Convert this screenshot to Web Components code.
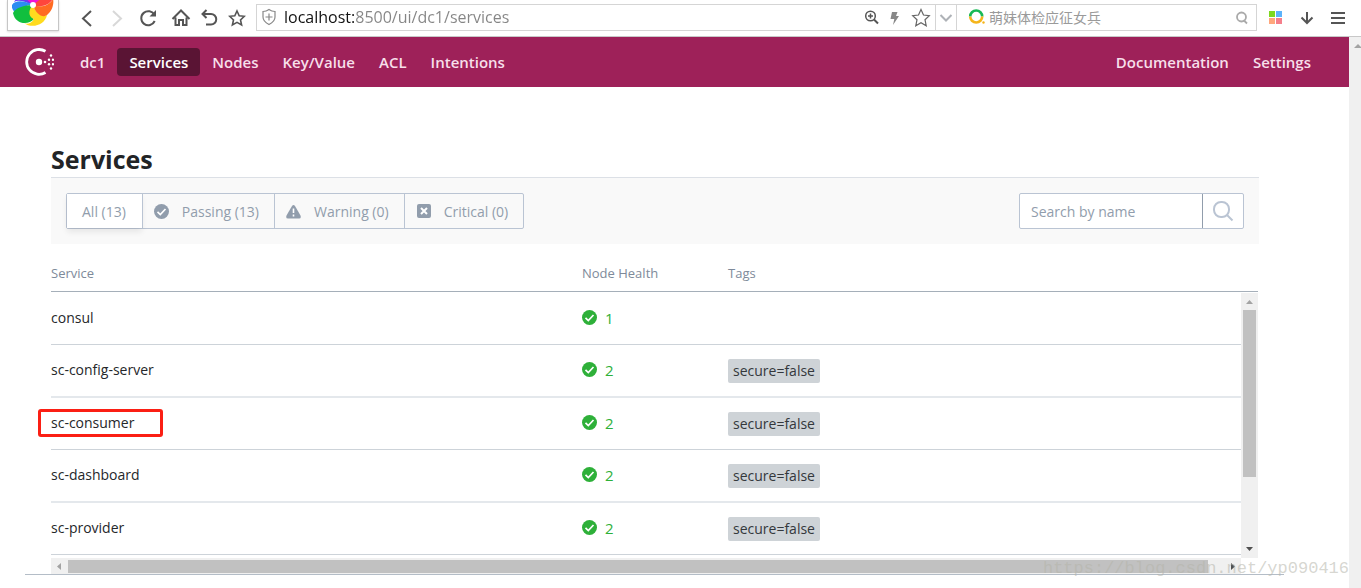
<!DOCTYPE html>
<html lang="en">
<head>
<meta charset="utf-8">
<title>Consul - Services</title>
<style>
  html, body { margin: 0; height: 100%; }
  body { overflow: hidden; background: #fff; font: 14px/20px "Open Sans", "Noto Sans", "Noto Sans CJK SC", sans-serif; color: #25272a; }
</style>
</head>
<body>
<app-window>
  <browser-bar slot="bar"></browser-bar>
  <consul-nav slot="nav"></consul-nav>
  <services-page></services-page>
</app-window>

<script>
const define = (name, html, setup) => customElements.define(name, class extends HTMLElement {
  constructor() {
    super();
    const tpl = document.createElement('template');
    tpl.innerHTML = html;
    this.attachShadow({ mode: 'open' }).append(tpl.content.cloneNode(true));
  }
  connectedCallback() { if (setup) setup(this, this.shadowRoot); }
});

define('app-window', `
<style>
  :host { display: flex; flex-direction: column; height: 100vh; }
  .view { flex: 1; min-height: 0; display: flex; }
  .content { flex: 1; min-width: 0; overflow: hidden; position: relative; }
  .rail { width: 12px; background: #f0f0f0; overflow: hidden; }
  .rail svg { display: block; margin: 5px 0 0 4px; }
  .mark { position: absolute; right: 0; bottom: 9px; font: 17px/20px "Liberation Mono", monospace; color: rgba(180,180,170,.55); pointer-events: none; }
</style>
<slot name="bar"></slot>
<div class="view">
  <div class="content">
    <slot name="nav"></slot>
    <slot></slot>
    <div class="mark">https://blog.csdn.net/yp090416</div>
  </div>
  <div class="rail"><svg width="10" height="8"><path d="M1 6L5 2L9 6Z" fill="#a3a3a3"/></svg></div>
</div>`);

define('browser-bar', `
<style>
  :host { display: flex; align-items: center; height: 36px; border-bottom: 1px solid #c8c8c8; background: #fff; padding: 0 8px 0 7px; overflow: hidden; }
  button { border: 0; padding: 0; background: none; display: flex; align-items: center; justify-content: center; }
  svg { display: block; }
  .brand { width: 52px; height: 31px; box-sizing: border-box; align-self: flex-start; border: 1px solid #c6c6c6; border-top: 0; box-shadow: 0 1px 2px #ddd; justify-content: center; align-items: flex-start; }
  .tools { display: grid; grid-template-columns: 30px 30px 32px 34px 22px 34px; margin: 0 2px 0 13px; }
  .address { flex: 1; min-width: 0; height: 27px; box-sizing: border-box; border: 1px solid #d5d5d5; display: flex; align-items: stretch; margin-bottom: 1px; }
  .address > svg { margin: 3px 7px 0 4px; flex: none; }
  input { border: 0; outline: 0; padding: 0; margin: 0; background: none; min-width: 0; flex: 1; font-family: inherit; }
  .url { font-size: 16px; padding-bottom: 1px; color: #777; background: linear-gradient(90deg, #111 71px, #858585 71px); -webkit-background-clip: text; background-clip: text; -webkit-text-fill-color: transparent; }
  .small { width: 24px; }
  .fav { width: 28px; }
  .more { width: 22px; box-sizing: border-box; border: solid #d5d5d5; border-width: 0 1px; }
  .search { display: flex; width: 299px; }
  .search svg { flex: none; margin: 3px 2px 0 11px; }
  .search button { width: 28px; }
  .search button svg { margin: 0; }
  .search input { font-size: 14px; padding-bottom: 1px; }
  .search input::placeholder { color: #9a9a9a; opacity: 1; }
  .right { display: grid; grid-template-columns: 31px 31px 31px; margin-left: 3px; }
</style>
<button class="brand" aria-label="Browser menu">
  <svg width="42" height="27" viewBox="0 0 42 27">
    <g>
      <path d="M21 5C18 -5 6 -6 2 2C7 -1 13 2 21 5Z" fill="#6a3df0"/>
      <path d="M21 5C12 0 3 0 0 5C-1 8 2 12 5 14C8 8 14 5 21 5Z" fill="#2b8df2"/>
      <path d="M21 5C12 5 3 8 1 13C3 24 16 26 22 19C17 16 17 10 21 5Z" fill="#11bf3e"/>
      <path d="M21 5C16 10 16 17 22 19C20 23 15 25 12 23C20 29 33 25 35 15C31 17 24 14 21 5Z" fill="#ffdb1e"/>
      <path d="M21 5C24 15 32 19 36 14C41 10 42 2 41 -1C37 6 29 8 21 5Z" fill="#ff6b23"/>
      <path d="M21 5C30 8 37 5 41 -1L31 -6Z" fill="#ff463c"/>
      <path d="M21 5L12 -3L31 -3Z" fill="#f312d6"/>
    </g>
    <circle cx="21" cy="5" r="3" fill="#fff"/>
  </svg>
</button>
<div class="tools">
  <button aria-label="Back"><svg width="18" height="20" fill="none" stroke="#555" stroke-width="2"><path d="M13 3L5 10.500L13 18"/></svg></button>
  <button aria-label="Forward"><svg width="18" height="20" fill="none" stroke="#d8d8d8" stroke-width="2"><path d="M5 3L13 10.500L5 18"/></svg></button>
  <button aria-label="Reload"><svg width="20" height="20" fill="none" stroke="#555" stroke-width="2"><path d="M16.500 7A7 7 0 1 0 16.700 13"/><path d="M18 2V8.500H11.500Z" fill="#555" stroke="none"/></svg></button>
  <button aria-label="Home"><svg width="20" height="20" fill="none" stroke="#555" stroke-width="2"><path d="M1.500 11L10 2.500L18.500 11M4.500 9.500V17H8V12H12V17H15.500V9.500"/></svg></button>
  <button aria-label="Undo"><svg width="18" height="20" fill="none" stroke="#555" stroke-width="2"><path d="M6.500 2L2.500 6L6.500 10M3 6H11A5 5 0 0 1 11 16.500H6"/></svg></button>
  <button aria-label="Favourites"><svg width="18" height="20" fill="none" stroke="#555" stroke-width="1.600"><path d="M9 3L11.200 7.800L16.300 8.300L12.500 11.900L13.600 17L9 14.400L4.400 17L5.500 11.900L1.700 8.300L6.800 7.800Z"/></svg></button>
</div>
<div class="address">
  <svg width="16" height="18" fill="none" stroke="#888" stroke-width="1.200"><path d="M8 1.500C10 3 12 3.500 14 3.500V9C14 13 11 15 8 16.500C5 15 2 13 2 9V3.500C4 3.500 6 3 8 1.500ZM8 5.500V12.500M4.500 9H11.500"/></svg>
  <input class="url" aria-label="Address" value="localhost:8500/ui/dc1/services">
  <button class="small" aria-label="Zoom"><svg width="16" height="16" fill="none" stroke="#555" stroke-width="1.500"><circle cx="7.500" cy="6" r="4.800"/><path d="M11 9.500L15 13.500" stroke-width="2"/><path d="M5 6H10M7.500 3.500V8.500"/></svg></button>
  <button class="small" aria-label="Fast mode"><svg width="12" height="16"><path d="M3 2H8.500L7 6H10L4 15L5.300 9H1.500Z" fill="#888"/></svg></button>
  <button class="fav" aria-label="Add to favourites"><svg width="20" height="20" fill="none" stroke="#666" stroke-width="1.200"><path d="M10 1.500L12.500 7L18.300 7.700L14 11.700L15.200 17.700L10 14.700L4.800 17.700L6 11.700L1.700 7.700L7.500 7Z"/></svg></button>
  <button class="more" aria-label="History"><svg width="14" height="10" fill="none" stroke="#aeb2b7" stroke-width="2"><path d="M1.500 2L7 7.500L12.500 2"/></svg></button>
  <div class="search">
    <svg width="19" height="18" fill="none" stroke-width="2.600"><path d="M2.200 8.500A6 6 0 0 1 14.200 8.500" stroke="#19b955"/><path d="M14.200 8.500A6 6 0 0 1 2.200 8.500" stroke="#f5b51b"/><circle cx="15.500" cy="14.500" r="1.200" fill="#f5b51b" stroke="none"/></svg>
    <input aria-label="Web search" placeholder="萌妹体检应征女兵">
    <button aria-label="Search"><svg width="14" height="14" fill="none" stroke="#aaa" stroke-width="1.800"><circle cx="6.500" cy="6" r="4.500"/><path d="M8.500 9L12 12.500"/></svg></button>
  </div>
</div>
<div class="right">
  <button aria-label="Apps"><svg width="14" height="14"><path d="M0 0H6V6H0Z" fill="#7dd820"/><path d="M7 0H13V6H7Z" fill="#5cb3fb"/><path d="M0 7H6V13H0Z" fill="#ffa77c"/><path d="M7 7H13V13H7Z" fill="#f57f8b"/></svg></button>
  <button aria-label="Downloads"><svg width="14" height="14" fill="none" stroke="#555" stroke-width="2"><path d="M7 1V12M1.500 6.500L7 12L12.500 6.500"/></svg></button>
  <button aria-label="Menu"><svg width="14" height="14" fill="#555"><path d="M0 1H14V3H0ZM0 6H14V8H0ZM0 11H14V13H0Z"/></svg></button>
</div>`);

define('consul-nav', `
<style>
  :host { display: flex; align-items: center; height: 50px; background: #9e2159; padding: 0 26px 0 24px; }
  nav { display: flex; }
  .main { flex: 1; margin-left: 14px; }
  a { padding: 4px 12px; border-radius: 4px; color: #f7dfea; font-size: 15px; font-weight: 600; text-decoration: none; }
  a[aria-current] { background: #5a1434; color: #fff; }
  svg { display: block; }
</style>
<svg width="30" height="30" viewBox="0 0 30 30" fill="#fff">
  <path d="M21.500 4.300A12.400 12.400 0 1 0 21.500 25.500" fill="none" stroke="#fff" stroke-width="2.800"/>
  <circle cx="15" cy="15" r="3.200"/><circle cx="21" cy="15" r="1.300"/>
  <g><circle cx="25" cy="12.800" r="1.200"/><circle cx="25" cy="17.200" r="1.200"/><circle cx="29" cy="12.800" r="1.200"/><circle cx="29" cy="17.200" r="1.200"/><circle cx="27" cy="8.500" r="1.200"/><circle cx="27" cy="21.500" r="1.200"/></g>
</svg>
<nav class="main" aria-label="Main">
  <a href="#dc1">dc1</a><a href="#services" aria-current="page">Services</a><a href="#nodes">Nodes</a><a href="#kv">Key/Value</a><a href="#acl">ACL</a><a href="#intentions">Intentions</a>
</nav>
<nav aria-label="Help"><a href="#docs">Documentation</a><a href="#settings">Settings</a></nav>`);

define('status-icon', `
<style>:host { display: block; width: 16px; height: 16px; } svg { display: none; }
  :host([kind=passing]) .p, :host([kind=warning]) .w, :host([kind=critical]) .c { display: block; }</style>
<svg class="p" width="16" height="16"><circle cx="7.500" cy="7.500" r="7.500" fill="currentColor"/><path d="M3.500 7.800L6.300 10.500L11.500 5" fill="none" stroke="#fff" stroke-width="1.700"/></svg>
<svg class="w" width="16" height="16"><path d="M6 2Q7.500 0 9 2L14.500 11.500Q15.500 14.500 13 14.500H2Q-.500 14.500 .5 11.500Z" fill="currentColor"/><path d="M7.500 4.500V9M7.500 10.500V12.500" stroke="#fff" stroke-width="1.600"/></svg>
<svg class="c" width="16" height="16"><rect x="1" y="0" width="14" height="14" rx="2" fill="currentColor"/><path d="M5 4L11 10M11 4L5 10" stroke="#fff" stroke-width="2"/></svg>`);

define('filter-bar', `
<style>
  :host { display: flex; justify-content: space-between; padding: 15px; background: #f9f9f9; border-top: 1px solid #dce0e6; color: #919dac; }
  fieldset { display: flex; margin: 0; padding: 0; min-width: 0; border: 1px solid #bac4d3; border-radius: 2px; height: 36px; box-sizing: border-box; }
  label { display: flex; align-items: center; gap: 12px; padding: 1px 15px 0 11px; border-left: 1px solid #bac4d3; }
  label:first-of-type { border: 0; padding: 1px 16px 0 15px; background: #fff; box-shadow: 0 4px 6px rgba(0,0,0,.08); }
  fieldset input { position: absolute; opacity: 0; margin: 0; }
  form { display: flex; height: 36px; width: 225px; box-sizing: border-box; border: 1px solid #bac4d3; border-radius: 2px; background: #fff; }
  form input { flex: 1; min-width: 0; border: 0; padding: 1px 11px 0; background: none; font: inherit; }
  form input::placeholder { color: #919dac; opacity: 1; }
  button { width: 41px; border: 0; border-left: 1px solid #919dac; padding: 0; background: none; display: flex; align-items: center; justify-content: center; }
</style>
<fieldset aria-label="Health status">
  <label><input type="radio" name="s" checked>All (13)</label>
  <label><input type="radio" name="s"><status-icon kind="passing"></status-icon>Passing (13)</label>
  <label><input type="radio" name="s"><status-icon kind="warning"></status-icon>Warning (0)</label>
  <label><input type="radio" name="s"><status-icon kind="critical"></status-icon>Critical (0)</label>
</fieldset>
<form role="search">
  <input type="text" aria-label="Search by name" placeholder="Search by name">
  <button type="button" aria-label="Search"><svg width="22" height="22" fill="none" stroke="#bac4d3" stroke-width="2"><rect x="2" y="2" width="15" height="15" rx="7"/><path d="M15 15L20.500 20.500"/></svg></button>
</form>`);

define('scroll-bar', `
<style>
  :host { display: flex; flex-direction: column; background: #f0f0f0; }
  .end { flex: none; width: 17px; height: 17px; display: block; fill: #505050; }
  .start { fill: #a3a3a3; }
  .track { flex: 1; display: flex; flex-direction: column; padding: 0 2px; }
  .thumb { background: #c1c1c1; height: var(--thumb); }
  .h { display: none; }
  :host([horizontal]) { flex-direction: row; }
  :host([horizontal]) .track { padding: 2px 0 1px; flex-direction: row; }
  :host([horizontal]) .thumb { height: auto; width: var(--thumb); }
  :host([horizontal]) .v { display: none; }
  :host([horizontal]) .h { display: block; }
</style>
<svg class="end start"><path class="v" d="M5 11L8.500 7L12 11Z"/><path class="h" d="M10 5L6 8.500L10 12Z"/></svg>
<div class="track"><div class="thumb"></div></div>
<svg class="end"><path class="v" d="M5 6L8.500 10L12 6Z"/><path class="h" d="M7 5L11 8.500L7 12Z"/></svg>`);

define('services-table', `
<style>
  :host { display: grid; grid-template-columns: 1fr 17px; grid-template-rows: 38px 265px 16px; }
  table { grid-area: 1 / 1 / 3 / 3; display: block; }
  thead, tbody { display: block; }
  tr { display: grid; grid-template-columns: 1fr 146px 513px; align-items: center; }
  th, td { padding: 0; text-align: left; }
  thead tr { height: 36px; padding-right: 17px; border-bottom: 1px solid #a5afb9; }
  th { font-size: 13px; font-weight: 400; color: #7e8a9a; }
  tbody { margin: 1px 17px 0 0; }
  tbody tr { height: 51px; border-bottom: 1px solid #cdd3d9; }
  tbody tr:nth-child(even) { border-bottom: 2px solid #e4e8ec; }
  td { position: relative; padding-bottom: 2px; }
  a { color: #25272a; font-weight: 500; text-decoration: none; }
  .health { display: flex; align-items: center; gap: 7px; color: #2eb039; font-size: 15px; }
  .tag { display: block; width: max-content; margin-top: 3px; padding: 2px 5px; border-radius: 2px; background: #ced3d7; color: #34383c; }
  .outline { position: absolute; left: -13px; top: -4px; width: 119px; height: 22px; border: 3px solid #fb1f14; border-radius: 3px; }
  .down { grid-area: 2 / 2; }
  .across { grid-area: 3 / 1; }
</style>
<table>
  <thead><tr><th>Service</th><th>Node Health</th><th>Tags</th></tr></thead>
  <tbody></tbody>
</table>
<scroll-bar class="down" style="--thumb:167px"></scroll-bar>
<scroll-bar class="across" horizontal style="--thumb:1140px"></scroll-bar>`, (host, root) => {
  const rows = [['consul', 1, ''], ['sc-config-server', 2, 'secure=false'], ['sc-consumer', 2, 'secure=false', true], ['sc-dashboard', 2, 'secure=false'], ['sc-provider', 2, 'secure=false']];
  root.querySelector('tbody').innerHTML = rows.map(([name, count, tag, marked]) => `
    <tr><td><a href="#${name}">${name}</a>${marked ? '<span class="outline"></span>' : ''}</td>
    <td class="health"><status-icon kind="passing"></status-icon>${count}</td>
    <td>${tag ? `<span class="tag">${tag}</span>` : ''}</td></tr>`).join('');
});

define('services-page', `
<style>
  :host { display: block; padding: 56px 65px 0 25px; }
  .frame { border-bottom: 1px solid #b4bdc7; }
  .inner { margin: 0 26px; }
  h1 { margin: 0 0 2px; font-size: 25px; line-height: 32px; font-weight: 700; color: #222426; }
  filter-bar { margin-right: -1px; }
  services-table { margin-top: 11px; }
</style>
<div class="frame"><div class="inner">
  <h1>Services</h1>
  <filter-bar></filter-bar>
  <services-table></services-table>
</div></div>`);
</script>
</body>
</html>
